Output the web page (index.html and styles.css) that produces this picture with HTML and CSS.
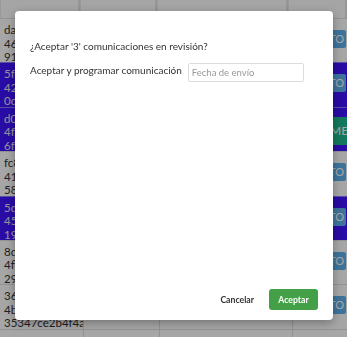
FILE: index.html
```html
<!DOCTYPE html>
<html lang="es">
<head>
  <meta charset="UTF-8" />
  <title>Comunicaciones en revisión</title>
  <link rel="stylesheet" href="styles.css">
</head>
<body>
  <div class="grid">
    <div class="head">
      <div class="hcell"></div>
      <div class="hcell"></div>
      <div class="hcell"></div>
      <div class="hcell"></div>
    </div>
    <div class="row">
      <div class="cell id">da<br>46<br>91</div><div class="cell"></div><div class="cell"></div><div class="cell act"><span class="btn blue">TO</span></div>
    </div>
    <div class="row sel">
      <div class="cell id">5f<br>42<br>0d</div><div class="cell"></div><div class="cell"></div><div class="cell act"><span class="btn blue">TO</span></div>
    </div>
    <div class="row sel">
      <div class="cell id">d0<br>4f<br>6f</div><div class="cell"></div><div class="cell"></div><div class="cell act"><span class="btn green">MEN</span></div>
    </div>
    <div class="row">
      <div class="cell id">fc8<br>41<br>58</div><div class="cell"></div><div class="cell"></div><div class="cell act"><span class="btn blue">TO</span></div>
    </div>
    <div class="row sel">
      <div class="cell id">5d<br>45<br>19</div><div class="cell"></div><div class="cell"></div><div class="cell act"><span class="btn blue">TO</span></div>
    </div>
    <div class="row">
      <div class="cell id">8d<br>4fb<br>29</div><div class="cell"></div><div class="cell"></div><div class="cell act"><span class="btn blue">TO</span></div>
    </div>
    <div class="row">
      <div class="cell id">36<br>4b<br>35347ce2b4f4a</div><div class="cell"></div><div class="cell"></div><div class="cell act"><span class="btn blue">TO</span></div>
    </div>
    <div class="row">
      <div class="cell id">917f0c7e-e2c0</div><div class="cell"></div><div class="cell"></div><div class="cell act"></div>
    </div>
  </div>

  <div class="backdrop"></div>

  <div class="modal">
    <div class="modal-body">
      <p class="question">¿Aceptar '3' comunicaciones en revisión?</p>
      <div class="field">
        <label for="fecha">Aceptar y programar comunicación</label>
        <input type="text" id="fecha" placeholder="Fecha de envío" autocomplete="off" />
      </div>
    </div>
    <div class="modal-footer">
      <button class="cancel">Cancelar</button>
      <button class="accept">Aceptar</button>
    </div>
  </div>
</body>
</html>
```

FILE: styles.css
```css
html, body {
  height: 100%;
}

body {
  margin: 0;
  font-family: Lato, "Noto Sans", sans-serif;
  color: #333;
  background: #fff;
  overflow: hidden;
}

.grid {
  width: 347px;
  height: 100vh;
  overflow: hidden;
}

.head {
  display: grid;
  grid-template-columns: 80px 77px 131px 59px;
  height: 18px;
  background: #fdfdfd;
}

.hcell {
  border-right: 2px solid #e6e6e6;
  border-left: 1px solid #ececec;
}

.row {
  display: grid;
  grid-template-columns: 84px 76px 133px 54px;
  height: 43.4px;
  border-top: 1px solid #e2e2e2;
  background: #fff;
  color: #333;
}

.row.sel {
  background: #3f12ff;
  color: #e4e4f4;
  border-top-color: #8a7aff;
}

.cell {
  border-right: 1px solid #e0e0e0;
  font-size: 11.5px;
  line-height: 13.5px;
  padding: 4px 4px 0 4px;
  white-space: nowrap;
  overflow: hidden;
}

.row.sel .cell {
  border-right-color: #3f12ff;
}

.act {
  padding: 11px 0 0 34px;
  border-right: none;
}

.btn {
  display: inline-block;
  padding: 2px 2px;
  font-size: 11px;
  line-height: 14px;
  color: #fff;
  border-radius: 2px;
}

.blue {
  background: #5fb3f0;
}

.green {
  background: #1fb88e;
  padding: 7px 3px;
  margin-top: -2px;
  font-size: 12px;
}

.backdrop {
  position: fixed;
  inset: 0;
  background: rgba(0, 0, 0, 0.35);
}

.modal {
  position: absolute;
  left: 15px;
  top: 11px;
  width: 318px;
  height: 309px;
  background: #fff;
  border-radius: 4px;
  box-shadow: 0 3px 10px rgba(0, 0, 0, 0.3);
  display: flex;
  flex-direction: column;
  box-sizing: border-box;
}

.modal-body {
  flex: 1;
  padding: 27px 15px 0 15px;
}

.question {
  margin: 0 0 9px 0;
  font-size: 10px;
  line-height: 16px;
}

.field {
  display: flex;
  align-items: center;
  gap: 6px;
  font-size: 10px;
}

.field label {
  margin-top: -6px;
  white-space: nowrap;
}

.field input {
  width: 116px;
  height: 19px;
  box-sizing: border-box;
  border: 1px solid #dcdcdc;
  border-radius: 2px;
  padding: 0 3px;
  font-family: inherit;
  font-size: 9.5px;
  color: #333;
}

.field input::placeholder {
  color: #999;
}

.modal-footer {
  display: flex;
  justify-content: flex-end;
  align-items: center;
  gap: 15px;
  padding: 0 15px 10px 0;
}

button {
  font-family: inherit;
  font-size: 8.7px;
  font-weight: 700;
  border: none;
  cursor: pointer;
}

.cancel {
  background: none;
  color: #333;
  padding: 0;
}

.accept {
  background: #43a047;
  color: #fff;
  width: 49px;
  height: 21px;
  border-radius: 3px;
  padding: 0;
}
```
